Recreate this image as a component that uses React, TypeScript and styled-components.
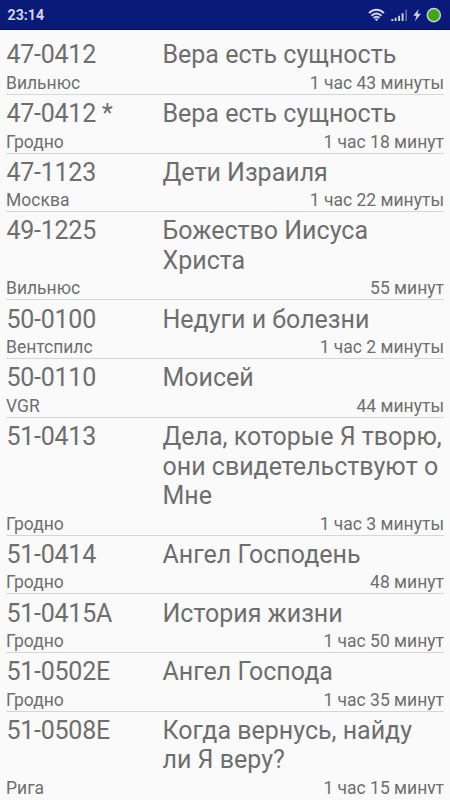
import React from "react";
import styled, { createGlobalStyle } from "styled-components";

const Global = createGlobalStyle`
  * { box-sizing: border-box; }
  html, body { margin: 0; background: #fafafa; }
  body { font-family: Roboto, sans-serif; color: #6e6e6e; overflow: hidden; }
`;
const Screen = styled.main`
  width: 450px;
  height: 800px;
  overflow: hidden;
  display: flex;
  flex-direction: column;
  background: #fafafa;
`;
const StatusBar = styled.header`
  height: 30px;
  flex: none;
  background: #0a1a78;
  border-bottom: 1px solid #050f5c;
  color: #d3d6ea;
  display: flex;
  align-items: center;
  justify-content: space-between;
  padding: 1px 8px 0 7.5px;
`;
const Clock = styled.time`
  font-size: 14.2px;
  font-weight: 700;
`;
const Indicators = styled.div`
  display: flex;
  align-items: center;
  svg { display: block; }
`;
const List = styled.ul`
  list-style: none;
  margin: 6px 6px 6px;
  padding: 0;
  height: 758px;
  overflow: hidden;
`;
const Item = styled.li<{ $lines: number }>`
  height: ${(p) => 58.78 + (p.$lines - 1) * 29.4}px;
  border-bottom: 1px solid #d6d6d6;
  padding-top: 4.2px;
`;
const Heading = styled.div<{ $lines: number }>`
  display: grid;
  grid-template-columns: 156.5px 1fr;
  height: ${(p) => p.$lines * 29.4}px;
  font-size: 25px;
  line-height: 29.4px;
  white-space: pre;
`;
const Code = styled.span`
  padding-left: 0.5px;
  letter-spacing: -0.25px;
`;
const Meta = styled.div`
  display: flex;
  justify-content: space-between;
  font-size: 17.5px;
  line-height: 20px;
  margin-top: 3.2px;
`;

type Sermon = { code: string; title: string[]; place: string; length: string };
const sermons: Sermon[] = [
  { code: "47-0412", title: ["Вера есть сущность"], place: "Вильнюс", length: "1 час 43 минуты" },
  { code: "47-0412 *", title: ["Вера есть сущность"], place: "Гродно", length: "1 час 18 минут" },
  { code: "47-1123", title: ["Дети Израиля"], place: "Москва", length: "1 час 22 минуты" },
  { code: "49-1225", title: ["Божество Иисуса", "Христа"], place: "Вильнюс", length: "55 минут" },
  { code: "50-0100", title: ["Недуги и болезни"], place: "Вентспилс", length: "1 час 2 минуты" },
  { code: "50-0110", title: ["Моисей"], place: "VGR", length: "44 минуты" },
  { code: "51-0413", title: ["Дела, которые Я творю,", "они свидетельствуют о", "Мне"], place: "Гродно", length: "1 час 3 минуты" },
  { code: "51-0414", title: ["Ангел Господень"], place: "Гродно", length: "48 минут" },
  { code: "51-0415A", title: ["История жизни"], place: "Гродно", length: "1 час 50 минут" },
  { code: "51-0502E", title: ["Ангел Господа"], place: "Гродно", length: "1 час 35 минут" },
  { code: "51-0508E", title: ["Когда вернусь, найду", "ли Я веру?"], place: "Рига", length: "1 час 15 минут" },
];

function StatusIcons() {
  return (
    <svg width="74" height="18" viewBox="0 0 74 18" fill="none">
      <g stroke="#d3d6ea" strokeWidth="2">
        <path d="M1.1 7.1C5.1 2.7 11.9 2.7 15.9 7.1" />
        <path d="M3.5 9.8C6.2 6.7 10.8 6.7 13.5 9.8" />
        <path d="M5.6 12.2C7.2 10.4 9.8 10.4 11.4 12.2" />
      </g>
      <path d="M6.7 13.1Q8.5 11.9 10.3 13.1L8.5 15.2Z" fill="#d3d6ea" />
      <path d="M24.3 13v2M27.6 11.7v3.3M31.1 9.8v5.2M34.6 7.3v7.7" stroke="#d3d6ea" strokeWidth="1.9" />
      <path d="M38.2 3.8v11.2" stroke="#6670ac" strokeWidth="1.6" />
      <path d="M50.6 2.9L45.3 9.7h3.2l-1.6 5.5 6-7.5h-3.4z" fill="#d3d6ea" />
      <circle cx="65.8" cy="9.1" r="6.6" fill="#43a616" stroke="#c6d3dc" strokeWidth="1.4" />
    </svg>
  );
}

export default function App() {
  return (
    <Screen>
      <Global />
      <StatusBar>
        <Clock>23:14</Clock>
        <Indicators>
          <StatusIcons />
        </Indicators>
      </StatusBar>
      <List>
        {sermons.map((s) => (
          <Item key={s.code} $lines={s.title.length}>
            <Heading $lines={s.title.length}>
              <Code>{s.code}</Code>
              <span>{s.title.join("\n")}</span>
            </Heading>
            <Meta>
              <span>{s.place}</span>
              <span>{s.length}</span>
            </Meta>
          </Item>
        ))}
      </List>
    </Screen>
  );
}
